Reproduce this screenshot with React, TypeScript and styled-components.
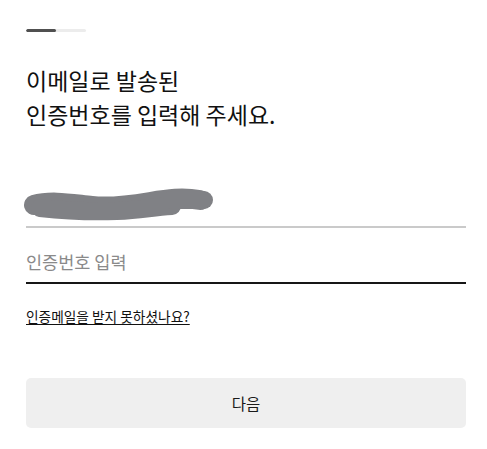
import React from 'react';
import styled, { createGlobalStyle } from 'styled-components';

const GlobalStyle = createGlobalStyle`
	html, body {
		margin: 0;
		padding: 0;
		background: #ffffff;
	}
	body {
		font-family: 'Noto Sans CJK KR', 'Noto Sans', sans-serif;
		color: #111111;
	}
`;

const Page = styled.div`
	width: 487px;
	box-sizing: border-box;
	padding: 29px 21px 0 26px;
`;

const Progress = styled.div`
	width: 60px;
	height: 3px;
	border-radius: 2px;
	background: #ececec;
	overflow: hidden;
`;

const ProgressFill = styled.div<{ $ratio: number }>`
	height: 100%;
	width: ${(p) => p.$ratio * 100}%;
	background: #505050;
	border-radius: 2px;
`;

const Heading = styled.h1`
	margin: 31px 0 0;
	font-size: 23px;
	font-weight: 400;
	line-height: 34px;
	color: #111111;
`;

const EmailField = styled.div`
	margin-top: 49px;
	height: 46px;
	display: flex;
	align-items: center;
	border-bottom: 2px solid #cacaca;
`;

const Redaction = styled.svg`
	display: block;
	margin-left: -4px;
`;

const CodeInput = styled.input`
	display: block;
	width: 100%;
	box-sizing: border-box;
	border: none;
	border-bottom: 2px solid #161616;
	outline: none;
	padding: 22px 0 8px;
	font-family: inherit;
	font-size: 17.5px;
	line-height: 24px;
	color: #111111;
	background: transparent;
	caret-color: #111;
	&::placeholder {
		color: #8a8a8a;
	}
`;

const ResendLink = styled.a`
	display: inline-block;
	margin-top: 23px;
	font-size: 13.7px;
	line-height: 19px;
	color: #111111;
	text-decoration: underline;
	text-underline-offset: 2px;
	cursor: pointer;
`;

const NextButton = styled.button`
	display: block;
	width: 100%;
	height: 50px;
	margin-top: 51px;
	border: none;
	border-radius: 5px;
	background: #efefef;
	font-family: inherit;
	font-size: 15.5px;
	color: #1a1a1a;
	cursor: pointer;
`;

const App = () => (
	<>
		<GlobalStyle />
		<Page>
			<Progress>
				<ProgressFill $ratio={0.5} />
			</Progress>
			<Heading>
				이메일로 발송된
				<br />
				인증번호를 입력해 주세요.
			</Heading>
			<EmailField>
				{/* masked e-mail address */}
				<Redaction width="194" height="36" viewBox="0 0 194 36">
					<g fill="none" stroke="#808185" strokeLinecap="round" strokeLinejoin="round">
						<path d="M12 20 C 30 15, 50 19, 70 21 S 110 20, 128 17 S 160 12, 178 15" strokeWidth="20" />
						<path d="M18 23 C 45 26, 70 27, 95 26 S 130 22, 150 21" strokeWidth="18" />
						<path d="M150 15 L 182 15" strokeWidth="18" />
					</g>
				</Redaction>
			</EmailField>
			<CodeInput type="text" placeholder="인증번호 입력" autoFocus />
			<ResendLink>인증메일을 받지 못하셨나요?</ResendLink>
			<NextButton type="button">다음</NextButton>
		</Page>
	</>
);

export default App;
